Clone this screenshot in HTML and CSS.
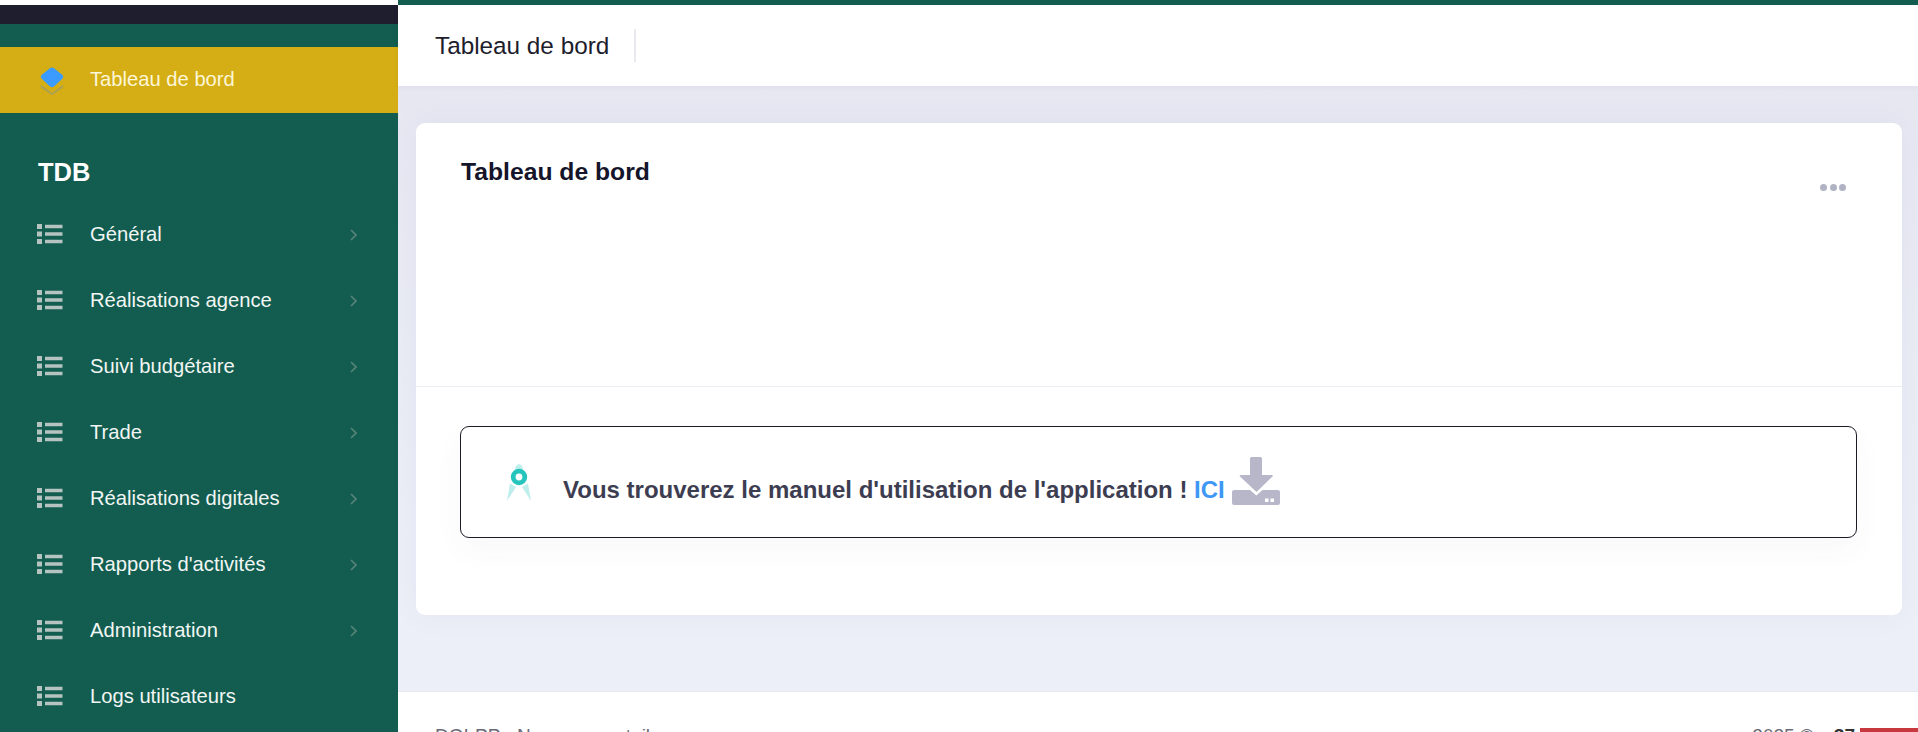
FILE: index.html
```html
<!DOCTYPE html>
<html lang="fr">
<head>
<meta charset="utf-8">
<title>Tableau de bord</title>
<link rel="stylesheet" href="styles.css">
</head>
<body>
<div class="app">
  <aside class="sidebar">
    <div class="brand"></div>
    <a class="dash-link">
      <svg class="dash-icon" width="24" height="28" viewBox="0 0 24 28"><path d="M1 18 L12 26 L23 18 L23 20.500 L12 28 L1 20.500Z" fill="#a8a05a"/><path d="M12 0.500 Q13 0.500 14 1.200 L22.500 8 Q24 9.800 22.500 11.500 L14 19.500 Q12 21 10 19.500 L1.500 11.500 Q0 9.800 1.500 8 L10 1.200 Q11 0.500 12 0.500Z" fill="#3b9bff"/></svg>
      <span class="label">Tableau de bord</span>
    </a>
    <h2 class="section">TDB</h2>
    <nav class="menu">
      <a class="item"><svg class="list-icon" viewBox="0 0 26 20"><path d="M0 0h5v5H0zM0 7.500h5v5H0zM0 15h5v5H0zM8 .8h17.500v3.400H8zM8 8.300h17.500v3.400H8zM8 15.800h17.500v3.400H8z"/></svg><span class="label">Général</span><svg class="chev" viewBox="0 0 7 12"><path d="M1 1l5 5-5 5"/></svg></a>
      <a class="item"><svg class="list-icon" viewBox="0 0 26 20"><path d="M0 0h5v5H0zM0 7.500h5v5H0zM0 15h5v5H0zM8 .8h17.500v3.400H8zM8 8.300h17.500v3.400H8zM8 15.800h17.500v3.400H8z"/></svg><span class="label">Réalisations agence</span><svg class="chev" viewBox="0 0 7 12"><path d="M1 1l5 5-5 5"/></svg></a>
      <a class="item"><svg class="list-icon" viewBox="0 0 26 20"><path d="M0 0h5v5H0zM0 7.500h5v5H0zM0 15h5v5H0zM8 .8h17.500v3.400H8zM8 8.300h17.500v3.400H8zM8 15.800h17.500v3.400H8z"/></svg><span class="label">Suivi budgétaire</span><svg class="chev" viewBox="0 0 7 12"><path d="M1 1l5 5-5 5"/></svg></a>
      <a class="item"><svg class="list-icon" viewBox="0 0 26 20"><path d="M0 0h5v5H0zM0 7.500h5v5H0zM0 15h5v5H0zM8 .8h17.500v3.400H8zM8 8.300h17.500v3.400H8zM8 15.800h17.500v3.400H8z"/></svg><span class="label">Trade</span><svg class="chev" viewBox="0 0 7 12"><path d="M1 1l5 5-5 5"/></svg></a>
      <a class="item"><svg class="list-icon" viewBox="0 0 26 20"><path d="M0 0h5v5H0zM0 7.500h5v5H0zM0 15h5v5H0zM8 .8h17.500v3.400H8zM8 8.300h17.500v3.400H8zM8 15.800h17.500v3.400H8z"/></svg><span class="label">Réalisations digitales</span><svg class="chev" viewBox="0 0 7 12"><path d="M1 1l5 5-5 5"/></svg></a>
      <a class="item"><svg class="list-icon" viewBox="0 0 26 20"><path d="M0 0h5v5H0zM0 7.500h5v5H0zM0 15h5v5H0zM8 .8h17.500v3.400H8zM8 8.300h17.500v3.400H8zM8 15.800h17.500v3.400H8z"/></svg><span class="label">Rapports d'activités</span><svg class="chev" viewBox="0 0 7 12"><path d="M1 1l5 5-5 5"/></svg></a>
      <a class="item"><svg class="list-icon" viewBox="0 0 26 20"><path d="M0 0h5v5H0zM0 7.500h5v5H0zM0 15h5v5H0zM8 .8h17.500v3.400H8zM8 8.300h17.500v3.400H8zM8 15.800h17.500v3.400H8z"/></svg><span class="label">Administration</span><svg class="chev" viewBox="0 0 7 12"><path d="M1 1l5 5-5 5"/></svg></a>
      <a class="item"><svg class="list-icon" viewBox="0 0 26 20"><path d="M0 0h5v5H0zM0 7.500h5v5H0zM0 15h5v5H0zM8 .8h17.500v3.400H8zM8 8.300h17.500v3.400H8zM8 15.800h17.500v3.400H8z"/></svg><span class="label">Logs utilisateurs</span></a>
    </nav>
  </aside>
  <div class="main">
    <header class="topbar">
      <h1 class="crumb">Tableau de bord</h1>
    </header>
    <div class="content">
      <section class="card">
        <div class="card-head">
          <h3 class="card-title">Tableau de bord</h3>
          <div class="dots"><i></i><i></i><i></i></div>
        </div>
        <div class="card-body">
          <div class="notice">
            <svg class="notice-icon" width="26" height="37" viewBox="0 0 25 37"><path d="M12.500 0q3.500 1 4 5h-8q.5-4 4-5z" fill="#bdeeec"/><path d="M3.500 19.500l6 3.500L.5 37zM21.500 19.500l-6 3.500 9 14z" fill="#bdeeec"/><circle cx="12.500" cy="13" r="5.800" fill="#fff" stroke="#25c5bd" stroke-width="4.800"/></svg>
            <p class="notice-text">Vous trouverez le manuel d'utilisation de l'application ! <a class="ici">ICI</a></p>
            <svg class="dl" width="48" height="48" viewBox="0 0 48 48"><path d="M18 1.500q0-1.500 1.500-1.500h9q1.500 0 1.500 1.500V18h9.500q2 0 1 1.500L24.500 35 8 19.500q-1-1.500 1-1.500H18z" fill="#b7b7c9"/><path d="M2 33h16l6.300 5.500L30.500 33H46q2 0 2 2v11q0 2-2 2H2q-2 0-2-2V35q0-2 2-2z" fill="#b7b7c9"/><path d="M33 41.500h3.500V45H33zM38.500 41.500H42V45h-3.500z" fill="#fff"/></svg>
          </div>
        </div>
      </section>
    </div>
    <footer class="footer">
      <span class="foot-left">DGI-PP - Nouveau portail</span>
      <span class="foot-right"><span class="foot-year">2025 ©</span><b class="foot-name">37</b><i class="foot-flag"></i></span>
    </footer>
  </div>
</div>
</body>
</html>
```
FILE: styles.css
```css
* { box-sizing: border-box; }
html, body { margin: 0; height: 732px; overflow: hidden; }
body { font-family: "Liberation Sans", Arial, sans-serif; background: #fff; }
h1, h2, h3, p { margin: 0; }
.app { display: flex; height: 732px; overflow: hidden; }

.sidebar { width: 398px; flex: none; height: 732px; background: #125d4f; border-top: 5px solid #fff; color: #fff; overflow: hidden; }
.brand { height: 19px; background: #1f1e2e; margin-bottom: 23px; }
.dash-link { height: 66px; background: #d4ae14; display: flex; align-items: center; padding-left: 40px; font-size: 20.200px; color: #fdf6d8; }
.dash-icon { margin: 1px 26px 0 0; flex: none; }
.section { font-size: 25.500px; font-weight: 700; line-height: 30px; padding: 44px 0 0 38px; height: 89px; }
.menu { display: flex; flex-direction: column; }
.item { height: 66px; display: flex; align-items: center; padding: 0 41px 0 37px; font-size: 20.200px; color: #f1f6f4; }
.list-icon { width: 26px; height: 20px; fill: #b5c4c1; flex: none; margin: -2px 27px 0 0; }
.label { flex: 1; padding-bottom: 2px; }
.chev { width: 7px; height: 12px; fill: none; stroke: #588379; stroke-width: 1.600; margin-top: -1px; }

.main { flex: 1; min-width: 0; display: flex; flex-direction: column; height: 732px; background: linear-gradient(180deg, #e6e7f1 12%, #eceff7 75%); }
.topbar { height: 86px; flex: none; background: #fff; border-top: 5px solid #125d4f; display: flex; align-items: center; padding-left: 37px; box-shadow: 0 1px 6px rgba(60, 60, 100, .05); }
.crumb { font-size: 24.300px; font-weight: 400; color: #1d1d2c; padding-right: 25px; height: 33px; line-height: 33px; border-right: 2px solid #e9e9ef; }

.content { height: 605px; flex: none; padding: 37px 16px 0 18px; }
.card { background: #fff; border-radius: 9px; height: 492px; box-shadow: 0 0 30px rgba(80, 80, 150, .05); }
.card-head { height: 264px; border-bottom: 1px solid #ecedf2; padding: 34px 56px 0 45px; display: flex; justify-content: space-between; align-items: flex-start; }
.card-title { font-size: 24.700px; font-weight: 700; color: #14142a; line-height: 30px; }
.dots { display: flex; gap: 2.500px; margin-top: 27px; }
.dots i { width: 7px; height: 7px; border-radius: 50%; background: #b0b3c4; }
.card-body { padding: 39px 45px 0 44px; }
.notice { height: 112px; border: 1.500px solid #1c1c28; border-radius: 9px; display: flex; align-items: center; padding-left: 45px; box-shadow: 0 12px 30px rgba(70, 70, 120, .04); background: #fff; }
.notice-icon { flex: none; }
.notice-text { font-size: 24px; font-weight: 700; color: #3d3d52; margin: 15px 0 0 31px; white-space: pre-wrap; }
.ici { color: #3f97f5; }
.dl { flex: none; margin: -3px 0 0 7px; }

.footer { flex: none; height: 41px; overflow: hidden; background: #fff; border-top: 1px solid #e8e9f0; display: flex; justify-content: space-between; padding: 33px 0 0 37px; font-size: 19px; line-height: 22px; color: #6a6a78; }
.foot-right { display: flex; }
.foot-year { margin-right: 20px; }
.foot-name { color: #333; font-weight: 700; margin-right: 5px; }
.foot-flag { width: 58px; height: 30px; margin-top: 3px; background: #c8383f; display: block; }
```
